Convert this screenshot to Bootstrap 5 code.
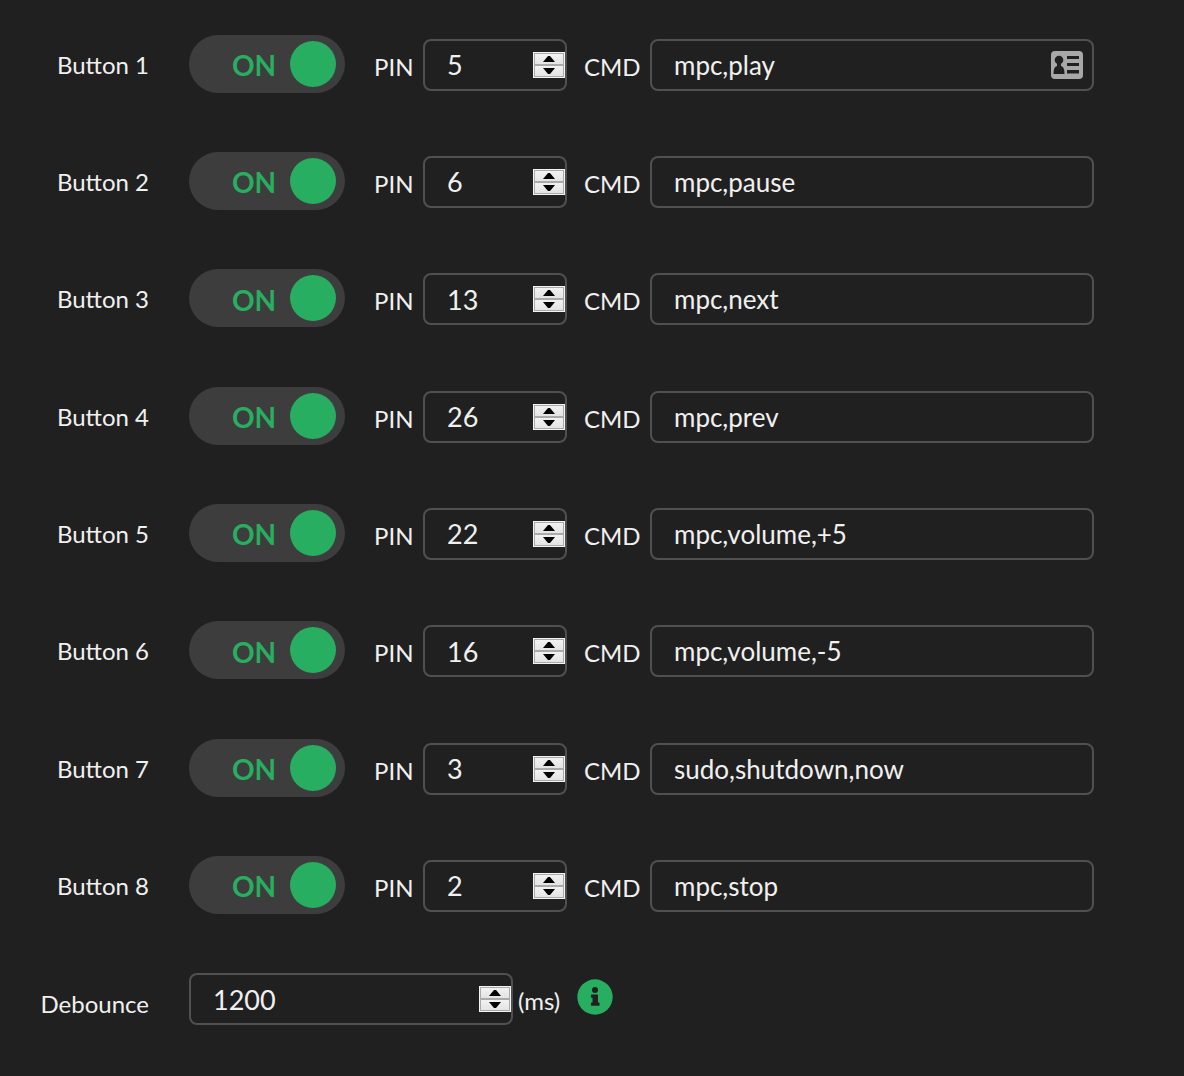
<!DOCTYPE html>
<html lang="en">
<head>
<meta charset="utf-8">
<meta name="viewport" content="width=device-width, initial-scale=1">
<title>GPIO buttons</title>
<link href="https://cdn.jsdelivr.net/npm/bootstrap@5.3.0/dist/css/bootstrap.min.css" rel="stylesheet">
<style>
body { background: #202020; color: #f0f0f0; font-family: Lato, "Liberation Sans", sans-serif; font-size: 24px; line-height: 32px; }
.gpio-form { display: grid; grid-auto-rows: 1fr; padding: 6px 90px 14px 0; }
.row-name { width: 149px; margin-right: 40px; }
.last-row { padding-bottom: 8px; }
.last-row .row-name { padding-top: 10px; }
.field-name { padding-top: 4px; }
.pin-name { width: 49px; margin-left: 29px; }
.cmd-name { width: 66px; margin-left: 17px; }
.unit-name { padding-top: 4px; margin-left: 5px; }
.pin-box { width: 144px; }
.delay-box { width: 324px; }
.form-control, .form-control:focus { height: 52px; padding: 0 22px; background: #202020; color: #f0f0f0; border: 2px solid #505050; border-radius: 8px; font-size: 26px; line-height: 34px; }
.form-control[type=number] { appearance: textfield; -moz-appearance: textfield; font-size: 27px; }
.form-control::-webkit-inner-spin-button { display: none; }
.onoff { width: 156px; height: 58px; padding: 0 9px 0 43px; margin-bottom: 2px; border-radius: 29px; background: #3d3d3d; color: #27ae60; font-size: 28px; font-weight: 700; cursor: pointer; }
.onoff-text { padding-top: 3px; }
.onoff-knob { width: 46px; height: 46px; background: #27ae60; }
.stepper { right: 2px; top: 13px; width: 32px; height: 26px; background: #f4f4f4; padding: 1px; }
.stepper button { height: 12px; padding: 0; border: 1px solid #aaa; background: linear-gradient(#f2f2f2, #e4e4e4); }
.stepper svg { display: block; margin: auto; }
.contact-icon { right: 11px; top: 12px; }
.info-btn { width: 36px; height: 36px; margin: 0 0 5px 17px; }
</style>
<script src="https://cdn.jsdelivr.net/npm/bootstrap@5.3.0/dist/js/bootstrap.bundle.min.js"></script>
</head>
<body>
<form class="gpio-form min-vh-100" id="form">
  <div class="last-row d-flex align-items-center">
    <label class="row-name text-end" for="delay">Debounce</label>
    <div class="delay-box position-relative"><input class="form-control" type="number" id="delay" value="1200"></div>
    <span class="unit-name">(ms)</span>
    <button type="button" class="info-btn btn p-0 border-0 d-flex" aria-label="Info">
      <svg width="36" height="36" viewBox="0 0 36 36"><circle cx="18" cy="18" r="17.700" fill="#27ae60"/><circle cx="18" cy="11" r="3" fill="#202020"/><path fill="#202020" d="M14.600 15.400h5.700q.7 0 .7.7v7.300h.9q.7 0 .7.7v2q0 .7-.7.7h-7.300q-.7 0-.7-.7v-2q0-.7.7-.7h.9v-4.600h-.9q-.7 0-.7-.7v-2q0-.7.7-.7z"/></svg>
    </button>
  </div>
</form>
<script>
const rows = [[5, 'mpc,play'], [6, 'mpc,pause'], [13, 'mpc,next'], [26, 'mpc,prev'], [22, 'mpc,volume,+5'], [16, 'mpc,volume,-5'], [3, 'sudo,shutdown,now'], [2, 'mpc,stop']];
const contact = `<svg class="contact-icon position-absolute" width="32" height="28" viewBox="0 0 32 28" aria-hidden="true"><rect width="32" height="28" rx="4" fill="#a8a8a8"/><g fill="#202020"><circle cx="8" cy="9" r="4.300"/><path d="M6 12h4v3q3.500.5 3.500 8h-11q0-7.500 3.500-8z"/><path d="M16 5h12v3H16zM16 12h12v3H16zM16 19h12v3.500H16z"/></g></svg>`;
const last = document.querySelector('.last-row');
rows.forEach(([pin, cmd], i) => {
  const n = i + 1;
  last.insertAdjacentHTML('beforebegin', `
  <div class="d-flex align-items-center">
    <label class="row-name text-end" for="on${n}">Button ${n}</label>
    <label class="onoff d-flex align-items-center justify-content-between flex-shrink-0 position-relative">
      <input class="visually-hidden" type="checkbox" role="switch" id="on${n}" checked><span class="onoff-text">ON</span><span class="onoff-knob rounded-circle"></span>
    </label>
    <label class="field-name pin-name" for="pin${n}">PIN</label>
    <div class="pin-box position-relative"><input class="form-control" type="number" id="pin${n}" value="${pin}"></div>
    <label class="field-name cmd-name" for="cmd${n}">CMD</label>
    <div class="flex-fill position-relative"><input class="form-control" type="text" id="cmd${n}" value="${cmd}">${n === 1 ? contact : ''}</div>
  </div>`);
});
document.querySelectorAll('input[type=number]').forEach(input => {
  input.insertAdjacentHTML('afterend', `<span class="stepper position-absolute d-flex flex-column">
    <button type="button" aria-label="Increase"><svg width="12" height="6"><path d="M0 6 5 0h2l5 6z"/></svg></button>
    <button type="button" aria-label="Decrease"><svg width="12" height="6"><path d="M0 0h12L7 6H5z"/></svg></button></span>`);
  const [up, down] = input.nextElementSibling.children;
  up.onclick = () => input.stepUp();
  down.onclick = () => input.stepDown();
});
</script>
</body>
</html>
